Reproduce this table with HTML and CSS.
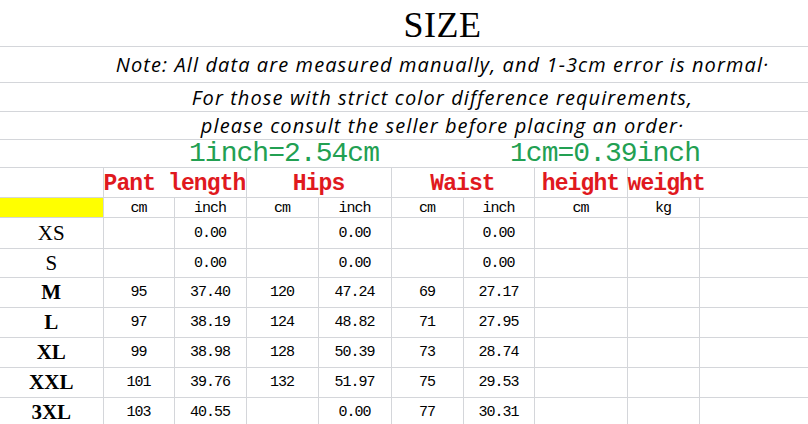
FILE: index.html
```html
<!DOCTYPE html>
<html>
<head>
<meta charset="utf-8">
<link rel="stylesheet" href="styles.css">
</head>
<body>
<table class="sheet">
  <colgroup>
    <col class="c-size"><col class="c71"><col class="c72"><col class="c72"><col class="c73"><col class="c72"><col class="c71"><col class="c93"><col class="c72"><col class="c109">
  </colgroup>
  <tbody>
    <tr class="r-title"><td colspan="10" class="wide title">SIZE</td></tr>
    <tr class="r-note"><td colspan="10" class="wide note">Note: All data are measured manually, and 1-3cm error is normal·</td></tr>
    <tr class="r-line1"><td colspan="10" class="wide note">For those with strict color difference requirements,</td></tr>
    <tr class="r-line2"><td colspan="10" class="wide note">please consult the seller before placing an order·</td></tr>
    <tr class="r-conv">
      <td colspan="5" class="conv conv-a">1inch=2.54cm</td>
      <td colspan="5" class="conv conv-b">1cm=0.39inch</td>
    </tr>
    <tr class="r-head">
      <td></td>
      <td colspan="2" class="head">Pant length</td>
      <td colspan="2" class="head">Hips</td>
      <td colspan="2" class="head">Waist</td>
      <td class="head">height</td>
      <td class="head open-r">weight</td>
      <td class="open-l"></td>
    </tr>
    <tr class="r-sub">
      <td class="yellow"></td>
      <td class="sub">cm</td><td class="sub">inch</td>
      <td class="sub">cm</td><td class="sub">inch</td>
      <td class="sub">cm</td><td class="sub">inch</td>
      <td class="sub">cm</td><td class="sub">kg</td><td></td>
    </tr>
    <tr class="r31"><td class="size">XS</td><td class="num"></td><td class="num">0.00</td><td class="num"></td><td class="num">0.00</td><td class="num"></td><td class="num">0.00</td><td></td><td></td><td></td></tr>
    <tr class="r29"><td class="size">S</td><td class="num"></td><td class="num">0.00</td><td class="num"></td><td class="num">0.00</td><td class="num"></td><td class="num">0.00</td><td></td><td></td><td></td></tr>
    <tr class="r30"><td class="size bold">M</td><td class="num">95</td><td class="num">37.40</td><td class="num">120</td><td class="num">47.24</td><td class="num">69</td><td class="num">27.17</td><td></td><td></td><td></td></tr>
    <tr class="r30"><td class="size bold">L</td><td class="num">97</td><td class="num">38.19</td><td class="num">124</td><td class="num">48.82</td><td class="num">71</td><td class="num">27.95</td><td></td><td></td><td></td></tr>
    <tr class="r30"><td class="size bold">XL</td><td class="num">99</td><td class="num">38.98</td><td class="num">128</td><td class="num">50.39</td><td class="num">73</td><td class="num">28.74</td><td></td><td></td><td></td></tr>
    <tr class="r30"><td class="size bold">XXL</td><td class="num">101</td><td class="num">39.76</td><td class="num">132</td><td class="num">51.97</td><td class="num">75</td><td class="num">29.53</td><td></td><td></td><td></td></tr>
    <tr class="r30"><td class="size bold">3XL</td><td class="num">103</td><td class="num">40.55</td><td class="num"></td><td class="num">0.00</td><td class="num">77</td><td class="num">30.31</td><td></td><td></td><td></td></tr>
  </tbody>
</table>
</body>
</html>
```
FILE: styles.css
```css
html, body {
  margin: 0;
  padding: 0;
  background: #ffffff;
}
body {
  width: 808px;
  height: 424px;
  overflow: hidden;
}
.sheet {
  width: 808px;
  table-layout: fixed;
  border-collapse: collapse;
  border-spacing: 0;
  color: #000;
}
.c-size { width: 103px; }
.c71 { width: 71px; }
.c72 { width: 72px; }
.c73 { width: 73px; }
.c93 { width: 93px; }
.c109 { width: 109px; }

.sheet td {
  border: 1px solid #d4d6da;
  padding: 0;
  text-align: center;
  vertical-align: middle;
  white-space: nowrap;
  overflow: visible;
  font-family: "Liberation Mono", monospace;
}
.sheet tr td:first-child { border-left: none; }
.sheet tr td:last-child { border-right: none; }
.sheet tr:first-child td { border-top: none; }

.r-title { height: 46px; }
.r-note { height: 36px; }
.r-line1 { height: 29px; }
.r-line2 { height: 28px; }
.r-conv { height: 28px; }
.r-head { height: 30px; }
.r-sub { height: 19px; }
.r31 { height: 31px; }
.r29 { height: 29px; }
.r30 { height: 30px; }

.sheet td.wide {
  padding-left: 77px;
}
.sheet td.title {
  font-family: "Liberation Serif", serif;
  font-size: 36px;
  letter-spacing: 0.5px;
  padding-top: 4px;
}
.sheet td.note {
  font-family: "Open Sans", sans-serif;
  font-style: italic;
  font-size: 20px;
  letter-spacing: 1.1px;
}
.sheet td.conv {
  font-family: "Liberation Mono", monospace;
  font-size: 28px;
  letter-spacing: -0.97px;
  color: #22a052;
  vertical-align: bottom;
  line-height: 27px;
}
.sheet td.conv-a {
  text-align: right;
  padding-right: 12px;
  border-right: none;
}
.sheet td.conv-b {
  padding-left: 119px;
  text-align: left;
  border-left: none;
}
.sheet td.head {
  font-family: "Liberation Mono", monospace;
  font-weight: bold;
  font-size: 23px;
  letter-spacing: -0.9px;
  color: #e0191e;
  vertical-align: bottom;
  line-height: 25px;
}
.sheet td.open-r { border-right: none; }
.sheet td.open-l { border-left: none; }
.sheet td.sub {
  font-size: 15px;
  letter-spacing: -1px;
  line-height: 16px;
  padding-top: 3px;
}
.sheet td.yellow { background: #ffff00; }
.sheet td.size {
  font-family: "Liberation Serif", serif;
  font-size: 21px;
}
.sheet td.bold { font-weight: bold; }
.sheet td.num {
  font-size: 15px;
  letter-spacing: -1px;
}
```
